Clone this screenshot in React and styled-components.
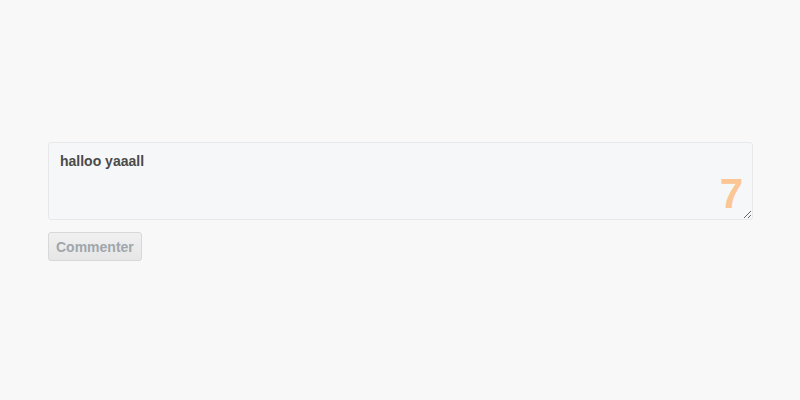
import React from "react";
import styled, { createGlobalStyle } from "styled-components";

const Global = createGlobalStyle`
  html, body { margin: 0; padding: 0; background: #f8f8f8; }
  body { font-family: "Liberation Sans", Arial, sans-serif; }
`;

const Page = styled.div`
  width: 800px;
  height: 400px;
  box-sizing: border-box;
  padding: 142px 47px 0 48px;
`;

const Field = styled.div`
  position: relative;
`;

const Area = styled.textarea`
  display: block;
  width: 100%;
  height: 78px;
  box-sizing: border-box;
  margin: 0;
  padding: 10px 11px;
  border: 1px solid #e6e8ea;
  border-radius: 3px;
  background: #f5f7f8;
  color: #4a4a4a;
  font-family: "Liberation Sans", Arial, sans-serif;
  font-weight: bold;
  font-size: 14px;
  line-height: 16px;
  outline: none;
  resize: vertical;
`;

const Counter = styled.span`
  position: absolute;
  right: 10px;
  bottom: 5px;
  font-family: "Liberation Sans", Arial, sans-serif;
  font-weight: bold;
  font-size: 42px;
  line-height: 1;
  color: #fbc594;
  pointer-events: none;
`;

const Button = styled.button`
  margin-top: 12px;
  height: 29px;
  padding: 0 7px;
  border: 1px solid #d6d8da;
  border-radius: 3px;
  background: linear-gradient(#f0f0f0, #e6e6e6);
  color: #a0a6ab;
  font-family: "Liberation Sans", Arial, sans-serif;
  font-weight: bold;
  font-size: 14px;
  cursor: default;
`;

export default function App() {
  return (
    <Page>
      <Global />
      <Field>
        <Area defaultValue="halloo yaaall" />
        <Counter>7</Counter>
      </Field>
      <Button disabled>Commenter</Button>
    </Page>
  );
}
